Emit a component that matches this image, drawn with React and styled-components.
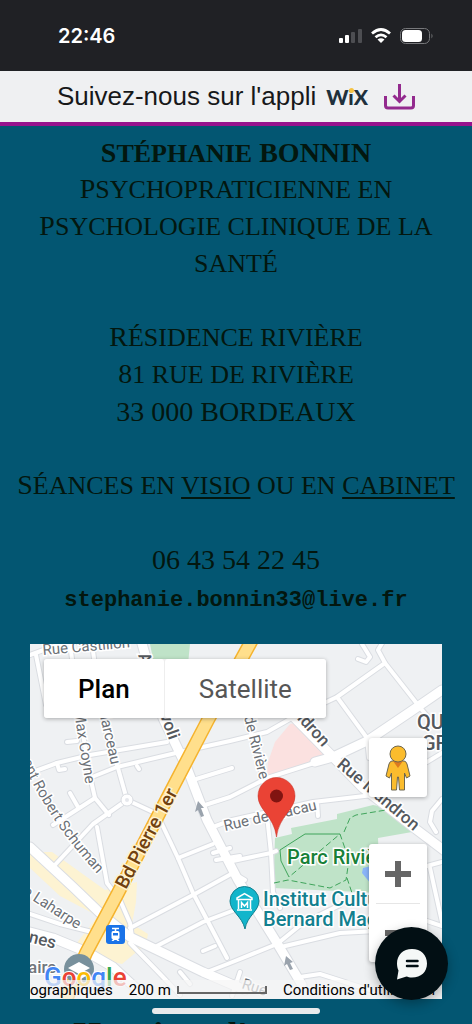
import React, { useState } from "react";
import styled, { createGlobalStyle } from "styled-components";

const minorRoads = [
  "M30 773L57 763L90 755L167 742",
  "M57 763L59 770L65 769",
  "M92 777L117 767L180 752L230 741L267 732L290 719L337 697L385 663L378 650L384 640",
  "M385 663L418 705L432 722",
  "M337 697L367 738L369 758",
  "M30 655L57 645L90 640",
  "M36 655L46 705",
  "M67 742L77 741",
  "M70 644L80 718L92 785L95 798L109 815",
  "M92 644L103 722L118 768L127 800",
  "M95 798L53 825M70 793L78 807",
  "M127 800L93 824L53 867",
  "M127 800L153 812L160 820L178 858L193 893L227 958",
  "M178 858L213 844",
  "M137 766L139 769",
  "M193 780L232 768",
  "M205 805L230 797L267 778L333 757",
  "M213 827L232 820L313 802L373 795M317 802L318 816",
  "M130 928L193 895L233 873L245 880",
  "M153 948L203 922L240 908",
  "M203 951L215 946",
  "M207 972L230 963L277 944L303 923L340 905",
  "M281 947L340 933L377 931",
  "M130 943L163 977L180 995",
  "M97 827L107 883L120 900L130 923L132 937",
  "M30 914L60 924L96 933",
  "M247 718L263 778L271 853L273 892L280 908",
  "M228 862L271 853L276 851",
  "M230 862L246 892",
  "M362 644L370 657L366 662L358 659",
  "M427 762L442 753",
  "M442 799L432 811L430 822L436 832",
  "M427 866L442 862M430 868L442 922M427 921L442 926",
  "M213 853L230 848M216 860L240 856",
  "M300 977L320 974L370 990",
  "M180 972L190 984M232 996L240 972",
];

const majorRoads = [
  "M141 640L163 718L187 768L207 820L238 880L277 943L302 985",
  "M30 847L73 887L100 913L130 937L203 972L245 990",
  "M30 932L53 938L87 952L113 967L142 994",
  "M442 690L410 712L367 741L333 757L315 762",
  "M285 708L333 757L363 788L417 830L446 852",
];

const boulevard = "M252 640L208 720L160 812L118 893L86 953L66 1000";

const MapDrawing = () => (
  <MapSvg viewBox="30 644 412 355" preserveAspectRatio="xMidYMid slice">
    <defs>
      <path id="schuman" d="M18 750Q42 818 116 894" />
    </defs>
    <rect x="-400" y="400" width="1300" height="900" fill="#eff1f3" />
    <path d="M150 644H190L188 664H154Z" fill="#bfe3c8" />
    <path d="M290 724L300 722L329 757L267 776L268 762L275 742Z" fill="#fbe1e0" />
    <path
      d="M30 852L52 852L105 890L137 882L136 902L132 924L148 934L146 944L122 964L86 956L76 944L98 916L60 896L30 868Z"
      fill="#fdf3d2"
    />
    <path
      d="M275 838L292 834L291 828L337 819L337 814L373 805L390 808L416 828L412 832L378 838L380 893L273 888Z"
      fill="#bfe3c8"
    />
    <path d="M363 868L371 866L371 884L362 873Z" fill="#8ab4f8" />
    <g fill="none" stroke="#dadde2" strokeLinejoin="round" strokeLinecap="round">
      {minorRoads.map((d) => (
        <path key={d} d={d} strokeWidth="6" />
      ))}
      {majorRoads.map((d) => (
        <path key={d} d={d} strokeWidth="11" />
      ))}
    </g>
    <g fill="none" stroke="#ffffff" strokeLinejoin="round" strokeLinecap="round">
      {minorRoads.map((d) => (
        <path key={d} d={d} strokeWidth="4" />
      ))}
      {majorRoads.map((d) => (
        <path key={d} d={d} strokeWidth="9" />
      ))}
    </g>
    <circle cx="127" cy="800" r="6" fill="#ffffff" stroke="#dadde2" />
    <circle cx="127" cy="800" r="2" fill="#e6e8ec" />
    <g fill="none">
      <path d={boulevard} stroke="#f5b32d" strokeWidth="14" />
      <path d={boulevard} stroke="#ffdf8c" strokeWidth="11" />
    </g>
    <g fill="none" stroke="#3fa45b" strokeWidth="1">
      <path d="M289 877L281 861L280 850L305 834L340 834" />
      <g strokeDasharray="6 3">
        <path d="M274 883L288 880L330 888L346 880L349 860L340 834L289 877" />
        <path d="M344 832L350 818L356 815L386 810" />
        <path d="M347 878L352 893" />
      </g>
    </g>
    <path
      d="M198 801L204 808L201 808L204 816L201 817L198 810L195 812Z"
      fill="#9aa3ad"
    />
    <path
      d="M286 956L293 962L290 963L293 969L290 970L287 964L284 966Z"
      fill="#9aa3ad"
    />

    <Street x="43" y="655" transform="rotate(-5 43 655)">Rue Castillon</Street>
    <Street x="74" y="711" transform="rotate(81 74 711)">Max Coyne</Street>
    <Street x="98" y="708" transform="rotate(77 98 708)">Marceau</Street>
    <Street>
      <textPath href="#schuman" startOffset="12">
        ent Robert Schuman
      </textPath>
    </Street>
    <Street x="15" y="889" transform="rotate(33 15 889)">de Laharpe</Street>
    <Street x="225" y="831" transform="rotate(-13 225 831)">
      Rue de Macau
    </Street>
    <Street x="244" y="717" transform="rotate(76 244 717)">de Rivière</Street>
    <Street x="241" y="988" transform="rotate(18 241 988)">Rue</Street>
    <Avenue x="138" y="655" transform="rotate(70 138 655)">
      Av. de Tivoli
    </Avenue>
    <Avenue x="277" y="697" transform="rotate(48 277 697)">Mandron</Avenue>
    <Avenue x="336" y="766" transform="rotate(40 336 766)">
      Rue Mandron
    </Avenue>
    <Avenue x="28" y="942" transform="rotate(14 28 942)">nes</Avenue>
    <Avenue x="28" y="973" $color="#72777d">
      aire
    </Avenue>
    <District x="417" y="729">QUARTIER</District>
    <District x="422" y="750">GRAND</District>
    <Boulevard x="126" y="890" transform="rotate(-62 126 890)">
      Bd Pierre 1er
    </Boulevard>
    <Place x="287" y="864" $color="#188038">
      Parc Rivière
    </Place>
    <Place x="263" y="906" $color="#12808f">
      Institut Culturel
    </Place>
    <Place x="263" y="926" $color="#12808f">
      Bernard Magrez
    </Place>

    <rect x="106" y="925" width="19" height="19" rx="3" fill="#1a73e8" />
    <path
      d="M112 928.5H119M115.500 928.500V931"
      stroke="#ffffff"
      strokeWidth="1.500"
      fill="none"
    />
    <path
      d="M113 931H118Q119.500 931 119.500 933V938Q119.500 939 118 939L119.500 941H117.500L116.500 940H114.500L113.500 941H111.500L113 939Q111.500 939 111.500 938V933Q111.500 931 113 931ZM113 933V935.500H118V933Z"
      fill="#ffffff"
      fillRule="evenodd"
    />

    <path
      d="M245 929C242 916 230 911 230 901A14.500 14.500 0 0 1 259 901C259 911 247 916 245 929Z"
      fill="#12b5cb"
      stroke="#12808f"
      strokeWidth="1"
    />
    <path
      d="M237 898L244.500 893.500L252 898V899.500H237ZM238.500 900V909M250.500 900V909M237 910H252M241.500 908V902.500L244.500 906L247.500 902.500V908"
      stroke="#ffffff"
      strokeWidth="1.500"
      fill="none"
    />

    <circle cx="79" cy="969" r="15" fill="#78909c" />
    <path
      d="M68 968L79 962L90 968L79 974ZM72 972L79 976L86 972V976L79 980L72 976Z"
      fill="#ffffff"
    />

    <path
      d="M276.500 837C274 816 258 810 258 796A18.500 18.500 0 0 1 295 796C295 810 279 816 276.500 837Z"
      fill="#ea4335"
      stroke="#c5281c"
      strokeWidth="0.500"
    />
    <circle cx="276.500" cy="796" r="6.500" fill="#811411" />

    <GoogleText x="44" y="986">
      <tspan fill="#4285f4">G</tspan>
      <tspan fill="#ea4335">o</tspan>
      <tspan fill="#fbbc04">o</tspan>
      <tspan fill="#4285f4">g</tspan>
      <tspan fill="#34a853">l</tspan>
      <tspan fill="#ea4335">e</tspan>
    </GoogleText>
  </MapSvg>
);

const StatusIcons = () => (
  <svg width="96" height="18" viewBox="338 26 96 18" aria-hidden="true">
    <rect x="339" y="37" width="4" height="5" rx="1" fill="#ffffff" />
    <rect x="345" y="34" width="4" height="8" rx="1" fill="#ffffff" />
    <rect x="351" y="31" width="4" height="11" rx="1" fill="#4d4e52" />
    <rect x="358" y="28" width="4" height="14" rx="1" fill="#4d4e52" />
    <g fill="none" stroke="#ffffff" strokeWidth="2.800">
      <path d="M372 32.500Q381 24.500 390 32.500" />
      <path d="M375.500 36.200Q381 31.500 386.500 36.200" />
    </g>
    <path d="M377.500 38.500Q381 36 384.500 38.500L381 42Z" fill="#ffffff" />
    <rect
      x="400.500"
      y="27.500"
      width="29"
      height="15"
      rx="5"
      fill="none"
      stroke="#77787b"
    />
    <rect x="402" y="29" width="20" height="12" rx="3.500" fill="#ffffff" />
    <path d="M431.500 32.500Q433.500 35 431.500 37.500Z" fill="#77787b" />
  </svg>
);

const DownloadIcon = () => (
  <svg width="31" height="26" viewBox="0 0 31 26" aria-hidden="true">
    <g fill="none" stroke="#932a8e" strokeWidth="3">
      <path d="M1.500 12V21.500Q1.500 24 4 24H27Q29.500 24 29.500 21.500V12" />
      <path d="M15.500 0V17M9.500 11.500L15.500 17.500L21.500 11.500" />
    </g>
  </svg>
);

const PegmanIcon = () => (
  <svg width="26" height="46" viewBox="0 0 26 46" aria-hidden="true">
    <path
      d="M7 16H19Q21 16 22 19L25 31L21.500 33L19.500 28V45H14.500L13.500 32H12.500L11.500 45H6.500V28L4.500 33L1 31L4 19Q5 16 7 16Z"
      fill="#fbbc2d"
      stroke="#6d6650"
      strokeWidth="1"
    />
    <path d="M8 16H18L13 23Z" fill="#dd7a1f" />
    <circle cx="13" cy="9" r="8" fill="#fbbc2d" stroke="#6d6650" />
  </svg>
);

const ChatIcon = () => (
  <svg width="32" height="32" viewBox="0 0 32 32" aria-hidden="true">
    <path
      d="M16 1C25 1 31 7 31 15.500C31 24 25 29.500 16 29.500C13.500 29.500 12 29 10.500 28.500L1 31.500L2.500 22.500C1.500 20.500 1 18 1 15.500C1 7 7 1 16 1Z"
      fill="#f5f8f7"
    />
    <path
      d="M11 13H21.500M11 18H21.500"
      stroke="#020f14"
      strokeWidth="2.500"
      strokeLinecap="round"
    />
  </svg>
);

export default function App() {
  const [mapType, setMapType] = useState("plan");

  return (
    <Screen>
      <GlobalStyle />
      <StatusBar>
        <Time>22:46</Time>
        <StatusIcons />
      </StatusBar>
      <AppBanner href="#appli">
        <span>Suivez-nous sur l'appli</span>
        <WixLogo>
          W<WixDot>i</WixDot>X
        </WixLogo>
        <DownloadIcon />
      </AppBanner>
      <Contact>
        <Name>
          <FirstName>Stéphanie</FirstName> BONNIN
        </Name>
        <Line>Psychopraticienne en</Line>
        <Line>Psychologie clinique de la santé</Line>
        <Address>
          <Line as="span">résidence rivière</Line>
          <Line as="span">81 rue de rivière</Line>
          <Line as="span" $large>
            33 000 BORDEAUX
          </Line>
        </Address>
        <Line>
          Séances en <u>visio</u> ou en <u>cabinet</u>
        </Line>
        <Phone href="tel:0643542245">06 43 54 22 45</Phone>
        <Email href="mailto:stephanie.bonnin33@live.fr">
          stephanie.bonnin33@live.fr
        </Email>
      </Contact>
      <MapFrame>
        <MapDrawing />
        <MapTypes>
          <MapType
            type="button"
            $active={mapType === "plan"}
            onClick={() => setMapType("plan")}
          >
            Plan
          </MapType>
          <MapType
            type="button"
            $active={mapType === "satellite"}
            onClick={() => setMapType("satellite")}
          >
            Satellite
          </MapType>
        </MapTypes>
        <MapTools>
          <PegmanButton type="button" aria-label="Street View">
            <PegmanIcon />
          </PegmanButton>
          <ZoomGroup>
            <ZoomButton type="button" aria-label="Zoom avant">
              <svg width="26" height="26" viewBox="0 0 26 26">
                <path d="M0 13H26M13 0V26" stroke="#666666" strokeWidth="6" />
              </svg>
            </ZoomButton>
            <ZoomButton type="button" aria-label="Zoom arrière">
              <svg width="26" height="26" viewBox="0 0 26 26">
                <path d="M0 13H26" stroke="#666666" strokeWidth="6" />
              </svg>
            </ZoomButton>
          </ZoomGroup>
        </MapTools>
        <MapFooter>
          <span>ographiques</span>
          <Scale>
            200 m <ScaleBar />
          </Scale>
          <Terms href="#conditions">Conditions d'utilisation</Terms>
        </MapFooter>
      </MapFrame>
      <Hours>Horaires d'ouverture</Hours>
      <ChatButton type="button" aria-label="Chat">
        <ChatIcon />
      </ChatButton>
      <HomeIndicator />
    </Screen>
  );
}

const GlobalStyle = createGlobalStyle`
  * {
    box-sizing: border-box;
  }
  body {
    margin: 0;
    background: #035672;
  }
`;

const Screen = styled.div`
  height: 100vh;
  overflow: hidden;
  background: #035672;
  color: #03170f;
  font-family: "Liberation Serif", serif;
`;

const StatusBar = styled.header`
  display: flex;
  justify-content: space-between;
  align-items: center;
  height: 71px;
  padding: 0 38px 0 58px;
  color: #ffffff;
  background: #202125;
`;

const Time = styled.span`
  font-family: Inter, sans-serif;
  font-size: 20px;
  font-weight: 600;
`;

const AppBanner = styled.a`
  display: flex;
  justify-content: center;
  align-items: center;
  height: 55px;
  border-bottom: 4px solid #97138d;
  color: #17181a;
  background: #eff0f2;
  font-family: "Liberation Sans", sans-serif;
  font-size: 26px;
  text-decoration: none;
  svg {
    margin-left: 16px;
  }
`;

const WixLogo = styled.span`
  margin-left: 10px;
  color: #20303c;
  font-family: Lato, sans-serif;
  font-size: 21px;
  font-weight: 900;
`;

const WixDot = styled.span`
  position: relative;
  &::after {
    content: "";
    position: absolute;
    top: 4px;
    left: 1px;
    width: 5px;
    height: 5px;
    border-radius: 50%;
    background: #f6c343;
  }
`;

const Contact = styled.main`
  display: flex;
  flex-direction: column;
  align-items: center;
  padding: 8px 16px 0;
  line-height: 37px;
  text-align: center;
`;

const Name = styled.h1`
  margin: 0;
  font-size: 28px;
  font-weight: 700;
`;

const FirstName = styled.span`
  display: inline-block;
  font-size: 26px;
  line-height: 28px;
  text-transform: uppercase;
  &::first-letter {
    font-size: 28px;
    line-height: 28px;
  }
`;

const Line = styled.p`
  display: block;
  margin: 0;
  font-size: ${(props) => (props.$large ? "28px" : "26px")};
  text-transform: uppercase;
  &::first-letter {
    font-size: 28px;
    line-height: 28px;
  }
  u {
    text-decoration-thickness: 2px;
    text-underline-offset: 3px;
  }
`;

const Address = styled.address`
  margin: 37px 0;
  font-style: normal;
`;

const Phone = styled.a`
  margin-top: 37px;
  color: inherit;
  font-size: 28px;
  text-decoration: none;
`;

const Email = styled.a`
  margin-top: 4px;
  color: inherit;
  font-family: "Liberation Mono", monospace;
  font-size: 22px;
  font-weight: 700;
  text-decoration: none;
`;

const MapFrame = styled.section`
  position: relative;
  height: 355px;
  margin: 25px 30px 0;
  overflow: hidden;
  font-family: Roboto, sans-serif;
`;

const MapSvg = styled.svg`
  display: block;
  width: 100%;
  height: 100%;
`;

const Street = styled.text`
  fill: #6c7177;
  stroke: #ffffff;
  stroke-width: 3px;
  paint-order: stroke;
  font-size: 15px;
`;

const Avenue = styled.text`
  fill: ${(props) => props.$color || "#54585d"};
  stroke: #ffffff;
  stroke-width: 3px;
  paint-order: stroke;
  font-size: 17px;
  font-weight: 500;
`;

const District = styled(Avenue)`
  font-size: 20px;
`;

const Boulevard = styled.text`
  fill: #70410f;
  stroke: #fff3d0;
  stroke-width: 3px;
  paint-order: stroke;
  font-size: 19px;
  font-weight: 500;
`;

const Place = styled.text`
  fill: ${(props) => props.$color};
  stroke: #ffffff;
  stroke-width: 3px;
  paint-order: stroke;
  font-size: 20px;
  font-weight: 500;
`;

const GoogleText = styled.text`
  stroke: #ffffff;
  stroke-width: 2px;
  paint-order: stroke;
  font-size: 26px;
  font-weight: 500;
`;

const MapTypes = styled.div`
  position: absolute;
  top: 15px;
  left: 14px;
  display: flex;
  gap: 1px;
  border-radius: 3px;
  background: #eeeeee;
  box-shadow: 0 1px 4px rgba(0, 0, 0, 0.3);
`;

const MapType = styled.button`
  height: 59px;
  padding: 0 34px;
  border: none;
  border-radius: 3px;
  color: ${(props) => (props.$active ? "#000000" : "#565656")};
  background: #ffffff;
  font-family: inherit;
  font-size: 26px;
  font-weight: ${(props) => (props.$active ? 500 : 400)};
  cursor: pointer;
`;

const MapTools = styled.div`
  position: absolute;
  top: 94px;
  right: 15px;
  display: flex;
  flex-direction: column;
  gap: 47px;
`;

const PegmanButton = styled.button`
  display: flex;
  justify-content: center;
  align-items: center;
  width: 58px;
  height: 59px;
  padding: 0;
  border: none;
  border-radius: 3px;
  background: #ffffff;
  box-shadow: 0 1px 4px rgba(0, 0, 0, 0.3);
`;

const ZoomGroup = styled.div`
  display: flex;
  flex-direction: column;
  padding: 0 7px;
  border-radius: 3px;
  background: #ffffff;
  box-shadow: 0 1px 4px rgba(0, 0, 0, 0.3);
`;

const ZoomButton = styled.button`
  display: flex;
  justify-content: center;
  align-items: center;
  height: 59px;
  padding: 0;
  border: none;
  background: none;
  & + & {
    border-top: 1px solid #e6e6e6;
  }
`;

const MapFooter = styled.footer`
  position: absolute;
  right: 0;
  bottom: 0;
  left: 0;
  display: flex;
  align-items: center;
  gap: 16px;
  height: 19px;
  overflow: hidden;
  color: #000000;
  background: rgba(245, 245, 245, 0.7);
  font-size: 15px;
  white-space: nowrap;
`;

const Scale = styled.span`
  display: flex;
  align-items: center;
  gap: 6px;
`;

const ScaleBar = styled.span`
  width: 90px;
  height: 8px;
  border: 2px solid #666666;
  border-top: none;
`;

const Terms = styled.a`
  color: inherit;
  text-decoration: none;
`;

const Hours = styled.h2`
  margin: 16px 0 0;
  font-size: 36px;
  line-height: 40px;
  text-align: center;
`;

const ChatButton = styled.button`
  position: fixed;
  right: 24px;
  bottom: 24px;
  display: flex;
  justify-content: center;
  align-items: center;
  width: 73px;
  height: 73px;
  padding: 0;
  border: none;
  border-radius: 50%;
  background: #020f14;
  box-shadow: 0 4px 12px rgba(0, 0, 0, 0.3);
`;

const HomeIndicator = styled.div`
  position: fixed;
  bottom: 10px;
  left: 50%;
  width: 168px;
  height: 6px;
  border-radius: 3px;
  background: #e9eaec;
  transform: translateX(-50%);
`;
